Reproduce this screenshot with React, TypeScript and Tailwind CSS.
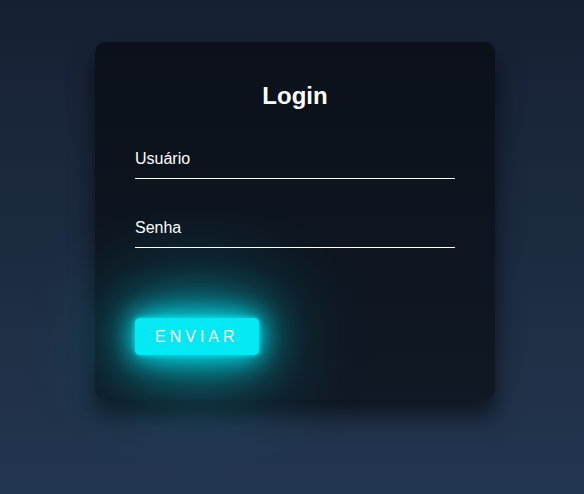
import React, { useState } from 'react'

export default function App() {
  const [user, setUser] = useState('')
  const [pass, setPass] = useState('')

  return (
    <div
      className="min-h-screen w-full bg-gradient-to-b from-[#162033] to-[#23364f] pt-[42px] pl-[6px] flex justify-center items-start"
      style={{ fontFamily: '"Liberation Sans", Arial, sans-serif' }}
    >
      {/* Login card */}
      <div className="w-[400px] rounded-[10px] bg-black/50 shadow-[0_15px_25px_rgba(0,0,0,0.6)] px-10 pt-[38px] pb-[45px]">
        <h2 className="text-center text-2xl leading-8 font-bold text-white">Login</h2>

        <form className="mt-[28px]" onSubmit={(e) => e.preventDefault()}>
          <input
            type="text"
            value={user}
            onChange={(e) => setUser(e.target.value)}
            placeholder="Usuário"
            className="block w-full bg-transparent py-[10px] text-base leading-[18px] text-white placeholder:text-white border-b border-white outline-none"
          />
          <input
            type="password"
            value={pass}
            onChange={(e) => setPass(e.target.value)}
            placeholder="Senha"
            className="mt-[30px] block w-full bg-transparent py-[10px] text-base leading-[18px] text-white placeholder:text-white border-b border-white outline-none"
          />

          <button
            type="submit"
            className="mt-[70px] h-[37px] px-[20px] rounded-[5px] bg-[#03e9f4] text-white text-base tracking-[4px] shadow-[0_0_5px_#03e9f4,0_0_25px_#03e9f4,0_0_50px_#03e9f4,0_0_100px_#03e9f4]"
          >
            ENVIAR
          </button>
        </form>
      </div>
    </div>
  )
}
